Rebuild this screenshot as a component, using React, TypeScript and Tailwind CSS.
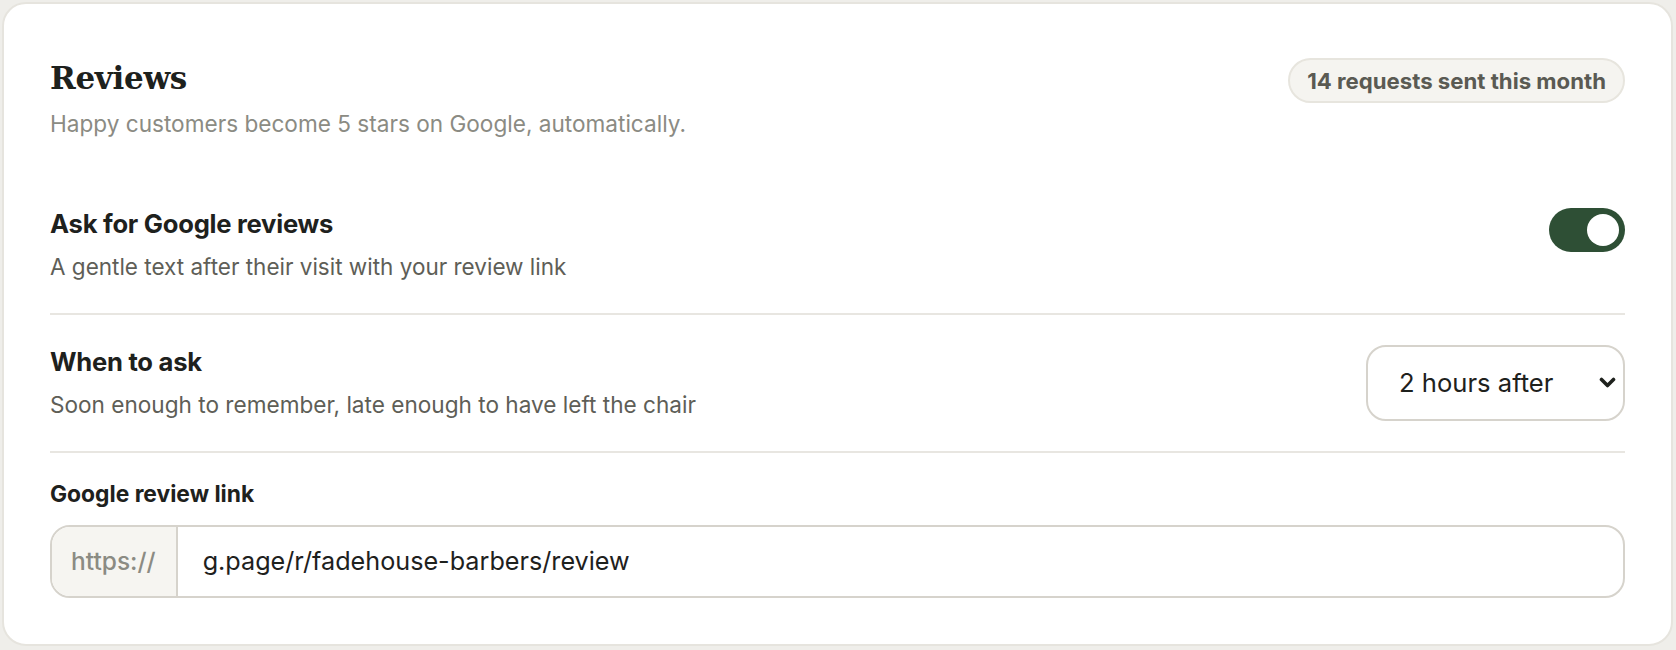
import React from "react";

function Toggle() {
  return (
    <div className="flex h-[44px] w-[76px] shrink-0 items-center justify-end rounded-full bg-[#2e4f35] px-[6px]">
      <div className="h-[32px] w-[32px] rounded-full bg-white" />
    </div>
  );
}

function Select() {
  return (
    <div className="flex h-[76px] w-[259px] shrink-0 items-center justify-between rounded-[20px] border-2 border-[#d6d3cc] bg-white pl-[31px] pr-[7px]">
      <span className="text-[25.6px] leading-[32px] text-[#1e211d]">2 hours after</span>
      <svg width="17" height="12" viewBox="0 0 17 12">
        <polyline points="2.5,2.5 8.5,8.5 14.5,2.5" fill="none" stroke="#1e211d" strokeWidth="3.6" strokeLinecap="round" strokeLinejoin="round" />
      </svg>
    </div>
  );
}

export default function App() {
  return (
    <div className="min-h-[650px] bg-[#efeeea] pt-[2px] pl-[2px] pr-[3px] pb-[3px] font-['Inter','Liberation_Sans',sans-serif]">
      <div className="rounded-[24px] border-2 border-[#e6e4de] bg-white px-[46px] pt-[54px] pb-[46px]">
        <div className="mb-[38px] flex items-start justify-between">
          <div>
            <h2 className="font-['DejaVu_Serif',serif] text-[31px] font-bold leading-[40px] tracking-[-0.01em] text-[#1d211d]">
              Reviews
            </h2>
            <p className="mt-[10px] text-[22.6px] leading-[32px] text-[#8b8b83]">
              Happy customers become 5 stars on Google, automatically.
            </p>
          </div>
          <span className="flex h-[45px] items-center rounded-full border-2 border-[#e7e5de] bg-[#f5f4f0] px-[17px] text-[22.2px] font-bold text-[#5a5a53]">
            14 requests sent this month
          </span>
        </div>

        <div className="flex items-start justify-between border-b-2 border-[#e8e6e1] py-[30px]">
          <div>
            <div className="text-[25.6px] font-bold leading-[32px] tracking-[-0.01em] text-[#1e211d]">
              Ask for Google reviews
            </div>
            <div className="mt-[11px] text-[22.5px] leading-[32px] text-[#5e5e57]">
              A gentle text after their visit with your review link
            </div>
          </div>
          <Toggle />
        </div>

        <div className="flex items-center justify-between border-b-2 border-[#e8e6e1] py-[30px]">
          <div>
            <div className="text-[25.6px] font-bold leading-[32px] tracking-[-0.01em] text-[#1e211d]">
              When to ask
            </div>
            <div className="mt-[11px] text-[22.6px] leading-[32px] text-[#5e5e57]">
              Soon enough to remember, late enough to have left the chair
            </div>
          </div>
          <Select />
        </div>

        <div className="pt-[30px]">
          <div className="text-[22.8px] font-bold leading-[22px] text-[#1e211d]">
            Google review link
          </div>
          <div className="mt-[20px] flex h-[73px] overflow-hidden rounded-[20px] border-2 border-[#d6d3cc]">
            <div className="flex items-center border-r-2 border-[#d6d3cc] bg-[#f6f5f1] pl-[19px] pr-[20px] text-[24.5px] font-medium text-[#8b8b83]">
              https://
            </div>
            <div className="flex flex-1 items-center pl-[25px] text-[25.2px] text-[#1e211d]">
              g.page/r/fadehouse-barbers/review
            </div>
          </div>
        </div>
      </div>
    </div>
  );
}
